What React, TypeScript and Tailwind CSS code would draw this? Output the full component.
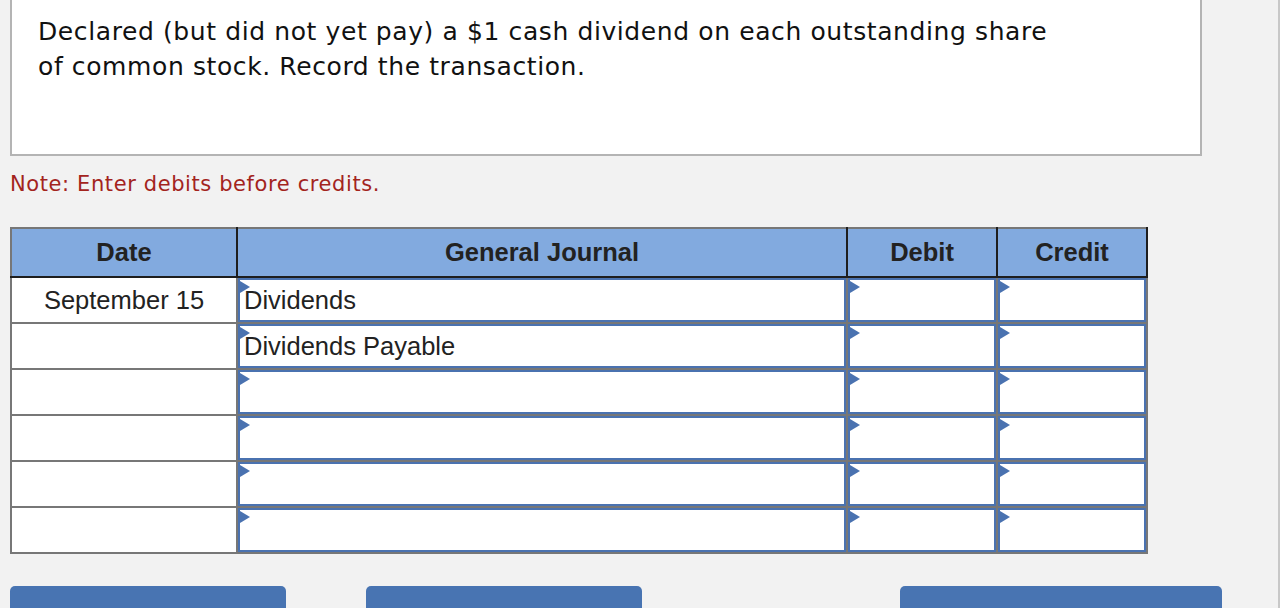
import React from "react";

const rows = [
  { date: "September 15", account: "Dividends" },
  { date: "", account: "Dividends Payable" },
  { date: "", account: "" },
  { date: "", account: "" },
  { date: "", account: "" },
  { date: "", account: "" },
];

const Flag = () => (
  <svg
    width="10"
    height="12"
    viewBox="0 0 10 12"
    className="absolute top-[1px] left-0"
  >
    <polygon points="0,0 10,6 0,12" fill="#4a72b0" />
  </svg>
);

const InputCell = ({ value }: { value?: string }) => (
  <td className="border-2 border-[#777] p-0 relative">
    <div className="h-[44px] border-2 border-[#4a72b0] bg-white relative flex items-center pl-[4px] text-[25.5px] text-[#222]">
      <Flag />
      {value}
    </div>
  </td>
);

const App = () => {
  return (
    <div className="h-[608px] overflow-hidden bg-[#f2f2f2] border-r-2 border-[#c8c8c8] w-[1280px] font-['Liberation_Sans',Arial,sans-serif]">
      <div className="pl-[10px]">
        <div className="w-[1192px] h-[156px] bg-white border-x-2 border-b-2 border-[#b4b4b4] pl-[26px] pt-[14px] font-['DejaVu_Sans',Verdana,sans-serif] text-[25px] tracking-[0.6px] leading-[35px] text-[#111]">
          Declared (but did not yet pay) a $1 cash dividend on each outstanding share
          <br />
          of common stock. Record the transaction.
        </div>

        <p className="mt-[14px] font-['DejaVu_Sans',Verdana,sans-serif] text-[21px] tracking-[0.6px] leading-[28px] text-[#a3241d]">
          Note: Enter debits before credits.
        </p>

        <table className="mt-[29px] border-collapse border-2 border-[#777] bg-white table-fixed w-[1136px]">
          <colgroup>
            <col className="w-[226px]" />
            <col className="w-[610px]" />
            <col className="w-[150px]" />
            <col className="w-[150px]" />
          </colgroup>
          <thead>
            <tr className="h-[49px] bg-[#82aadf] text-[25.5px] font-bold text-[#222]">
              <th className="border-r-2 border-b-2 border-[#1e1e1e] font-bold">Date</th>
              <th className="border-r-2 border-b-2 border-[#1e1e1e] font-bold">General Journal</th>
              <th className="border-r-2 border-b-2 border-[#1e1e1e] font-bold">Debit</th>
              <th className="border-r-2 border-b-2 border-[#1e1e1e] font-bold">Credit</th>
            </tr>
          </thead>
          <tbody>
            {rows.map((r, i) => (
              <tr key={i} className="h-[46px]">
                <td className="border-2 border-[#777] text-center text-[25.5px] text-[#222]">
                  {r.date}
                </td>
                <InputCell value={r.account} />
                <InputCell />
                <InputCell />
              </tr>
            ))}
          </tbody>
        </table>

        <div className="flex mt-[32px]">
          <button className="w-[276px] h-[44px] bg-[#4874b2] rounded-t-[5px]" />
          <button className="ml-[80px] w-[276px] h-[44px] bg-[#4874b2] rounded-t-[5px]" />
          <button className="ml-[258px] w-[322px] h-[44px] bg-[#4874b2] rounded-t-[5px]" />
        </div>
      </div>
    </div>
  );
};

export default App;
